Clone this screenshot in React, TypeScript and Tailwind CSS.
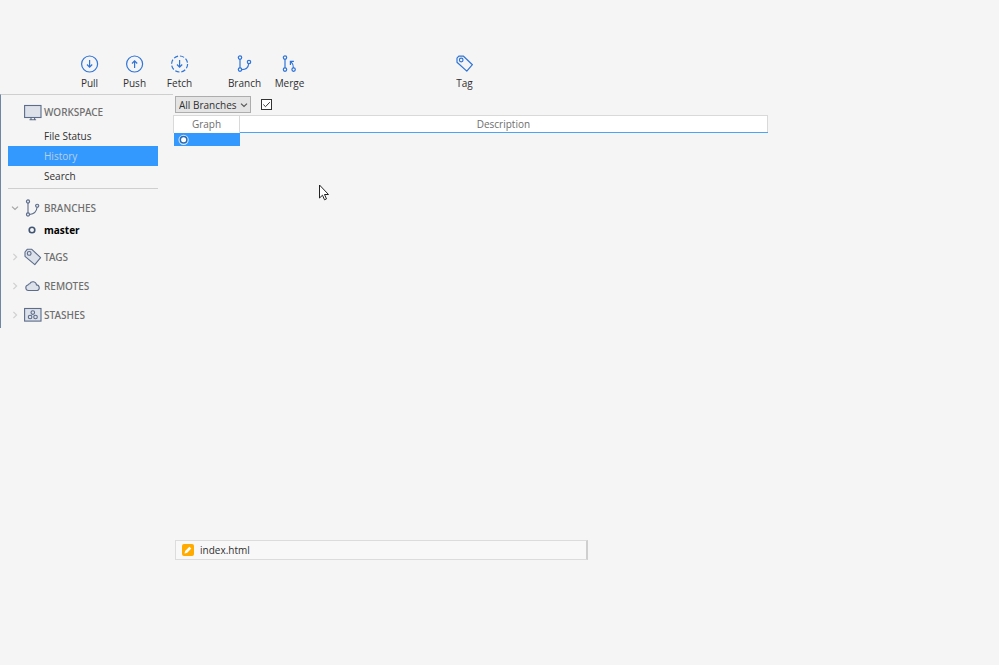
import React, { useState } from 'react';

const TOOLBAR_GROUPS = [
  ['Pull', 'Push', 'Fetch'],
  ['Branch', 'Merge'],
  ['Tag'],
];

const WORKSPACE_ITEMS = ['File Status', 'History', 'Search'];

function ToolbarIcon({ name }: { name: string }) {
  return (
    <svg width="20" height="20" viewBox="0 0 20 20" fill="none" stroke="#2f74d8" strokeWidth="1.2">
      {name === 'Pull' && (
        <>
          <circle cx="9.6" cy="10" r="8" />
          <path d="M9.6 6v7M7 10.5l2.6 2.7 2.6-2.7" />
        </>
      )}
      {name === 'Push' && (
        <>
          <circle cx="9.6" cy="10" r="8" />
          <path d="M9.6 14V7M7 9.5l2.6-2.7 2.6 2.7" />
        </>
      )}
      {name === 'Fetch' && (
        <>
          <circle cx="9.6" cy="10" r="8" strokeDasharray="4.4 1.9" />
          <path d="M9.6 6v7M7 10.5l2.6 2.7 2.6-2.7" />
        </>
      )}
      {name === 'Branch' && (
        <>
          <circle cx="5" cy="3.6" r="1.7" />
          <circle cx="5" cy="15.6" r="1.7" />
          <circle cx="14" cy="8" r="1.7" />
          <path d="M5 5.3v8.6M6.7 15.6c4 0 6.6-2 7-5.9" />
        </>
      )}
      {name === 'Merge' && (
        <>
          <circle cx="5" cy="3.6" r="1.7" />
          <circle cx="5" cy="15.6" r="1.7" />
          <circle cx="13.6" cy="15.6" r="1.7" />
          <path d="M5 5.3v8.6M13.4 13.9c0-2.6-.6-4.4-2.4-6.2M10.4 11V7.3h3.5" />
        </>
      )}
      {name === 'Tag' && (
        <>
          <path d="M2 4.2L3.8 2.2h4.7l8.9 8.5-5.6 6.4L2 8.2z" strokeLinejoin="round" />
          <circle cx="6.2" cy="6" r="1.8" />
        </>
      )}
    </svg>
  );
}

function SectionIcon({ name }: { name: string }) {
  return (
    <svg width="18" height="18" viewBox="0 0 18 18" fill="#dde1ea" stroke="#5c6c89" strokeWidth="1.1" className="shrink-0">
      {name === 'WORKSPACE' && (
        <>
          <rect x="0.6" y="1.5" width="16.4" height="12" />
          <path d="M7 13.8v1.7M10.6 13.8v1.7M5.5 15.7h6.6" />
        </>
      )}
      {name === 'BRANCHES' && (
        <>
          <path d="M4 4v10M5.6 15.5c4.5-.5 7-3 7.4-7" fill="none" />
          <circle cx="4" cy="2.5" r="1.6" />
          <circle cx="4" cy="15.5" r="1.6" />
          <circle cx="13.2" cy="6.8" r="1.6" />
        </>
      )}
      {name === 'TAGS' && (
        <>
          <path d="M1 4L3.2 1.3h4.6l8.8 8.3-5.8 7L1 8.3z" strokeLinejoin="round" />
          <circle cx="5.2" cy="5.4" r="1.9" />
        </>
      )}
      {name === 'REMOTES' && (
        <path d="M4.4 13.5a2.8 2.8 0 0 1-.5-5.5c.4-1 1.2-1.2 1.8-1.2a3.6 3.6 0 0 1 6.8 1.1 2.9 2.9 0 0 1 .9 5.6z" />
      )}
      {name === 'STASHES' && (
        <>
          <rect x="0.6" y="2.5" width="16.4" height="12.6" />
          <circle cx="8.8" cy="6.6" r="1.8" />
          <circle cx="6.1" cy="11" r="1.8" />
          <circle cx="11.5" cy="11" r="1.8" />
        </>
      )}
    </svg>
  );
}

function Chevron({ open, className }: { open: boolean; className: string }) {
  return (
    <svg width="8" height="8" viewBox="0 0 8 8" fill="none" stroke="currentColor" strokeWidth="1.2" className={className}>
      <path d={open ? 'M1 2.6L4 5.4l3-2.8' : 'M2.4 0.8L5.6 4 2.4 7.2'} />
    </svg>
  );
}

function Section({ name, open = false }: { name: string; open?: boolean }) {
  return (
    <button aria-expanded={open} className="flex h-5 w-full items-center pl-2.5 font-['Noto_Sans',sans-serif] font-medium text-[#6e6e6e]">
      <Chevron open={open} className={open ? 'text-[#a5a5a5]' : 'text-[#d0d0d0]'} />
      <span className="ml-[5px] flex items-center gap-0.5">
        <SectionIcon name={name} />
        {name}
      </span>
    </button>
  );
}

function Toolbar() {
  return (
    <header className="flex h-[94px] items-end pl-[67px] pb-1">
      {TOOLBAR_GROUPS.map((group, i) => (
        <div key={i} className={i === 0 ? 'flex' : i === 1 ? 'ml-5 flex' : 'ml-[130px] flex'}>
          {group.map(name => (
            <button key={name} className="flex w-[45px] flex-col items-center gap-0.5">
              <ToolbarIcon name={name} />
              <span className="leading-[14px]">{name}</span>
            </button>
          ))}
        </div>
      ))}
    </header>
  );
}

function Sidebar({ active, onSelect }: { active: string; onSelect: (item: string) => void }) {
  return (
    <nav className="w-[173px] shrink-0 self-start border-t border-l border-t-[#cfcfcf] border-l-[#6f87a5] pb-[3px]">
      <h2 className="flex h-[31px] items-center gap-0.5 pt-1 pl-[23px] font-['Noto_Sans',sans-serif] font-medium text-[#6e6e6e]">
        <SectionIcon name="WORKSPACE" />
        WORKSPACE
      </h2>
      <div className="mr-[15px] ml-[7px] border-b border-[#cfcfcf] pb-0.5">
        {WORKSPACE_ITEMS.map(item => (
          <button
            key={item}
            onClick={() => onSelect(item)}
            className={
              item === active
                ? 'block h-5 w-full bg-[#3399ff] pl-9 text-left text-[#b9cfe6]'
                : 'block h-5 w-full pl-9 text-left'
            }
          >
            {item}
          </button>
        ))}
      </div>
      <div className="mt-[9px] flex flex-col gap-[9px]">
        <div>
          <Section name="BRANCHES" open />
          <button className="flex h-5 w-full items-center pl-[27px] pt-1 font-bold text-black">
            <svg width="8" height="16" viewBox="0 0 8 16" className="mr-2">
              <circle cx="4" cy="8" r="2.8" fill="none" stroke="#405474" strokeWidth="1.6" />
            </svg>
            master
          </button>
        </div>
        <Section name="TAGS" />
        <Section name="REMOTES" />
        <Section name="STASHES" />
      </div>
    </nav>
  );
}

function HistoryTable() {
  return (
    <table className="w-[72%] table-fixed border-collapse">
      <thead>
        <tr className="h-[17px] bg-white text-[#6e6e6e]">
          <th className="w-[66px] border-t border-r border-l border-[#d9d9d9] p-0 leading-4 font-normal">Graph</th>
          <th className="border-t border-r border-b border-t-[#d9d9d9] border-r-[#d9d9d9] border-b-[#4da3f5] p-0 leading-4 font-normal">
            Description
          </th>
        </tr>
      </thead>
      <tbody>
        <tr>
          <td className="h-[13px] bg-[#3399ff] p-0">
            <svg width="14" height="13" viewBox="0 0 14 13" className="ml-[3px]">
              <circle cx="6.6" cy="6.8" r="4.6" fill="#2b6cb0" stroke="#d6e8fb" strokeWidth="1.1" />
              <circle cx="6.6" cy="6.8" r="2.5" fill="#fff" />
            </svg>
          </td>
          <td className="p-0" />
        </tr>
      </tbody>
    </table>
  );
}

export default function App() {
  const [active, setActive] = useState('History');
  const [showRemote, setShowRemote] = useState(true);

  return (
    <div className="relative min-h-screen bg-[#f5f5f5] font-['Open_Sans','Noto_Sans',sans-serif] text-[10px] text-[#303030]">
      <Toolbar />
      <div className="flex">
        <Sidebar active={active} onSelect={setActive} />
        <main className="min-w-0 flex-1">
          <div className="flex h-[21px] items-center gap-2.5 pl-0.5">
            <div className="relative">
              <select
                aria-label="Branch filter"
                className="block h-[17px] w-[76px] appearance-none border border-[#adadad] bg-[#e4e4e4] pl-[3px] leading-[14px]"
              >
                <option>All Branches</option>
              </select>
              <Chevron open className="pointer-events-none absolute top-[5px] right-[3px] text-[#555]" />
            </div>
            <label className="relative size-[11px]">
              <input
                type="checkbox"
                aria-label="Show remote branches"
                checked={showRemote}
                onChange={e => setShowRemote(e.target.checked)}
                className="block size-[11px] appearance-none border border-[#333] bg-white"
              />
              {showRemote && (
                <svg width="11" height="11" viewBox="0 0 11 11" fill="none" stroke="#333" className="pointer-events-none absolute inset-0">
                  <path d="M2.3 5.5l2.2 2.2 4.3-4.5" />
                </svg>
              )}
            </label>
          </div>
          <div className="h-[425px]">
            <HistoryTable />
          </div>
          <ul className="ml-0.5 w-1/2 border border-r-2 border-[#dcdcdc] border-r-[#cfcfcf] bg-[#f8f8f8]">
            <li className="flex h-[18px] items-center gap-1.5 pl-1.5">
              <svg width="12" height="12" viewBox="0 0 12 12">
                <rect width="12" height="12" rx="2" fill="#ffab00" />
                <path d="M2.5 9.5l.6-2.5L7.4 2.7l1.9 1.9L5 8.9z" fill="#fff" />
              </svg>
              index.html
            </li>
          </ul>
        </main>
      </div>
      <svg width="12" height="18" viewBox="0 0 12 18" className="pointer-events-none absolute top-[184px] left-[318px]">
        <path d="M1.5 1v13l3-2.8 2 4.6 2-.9-2-4.4h4z" fill="#fff" stroke="#222" />
      </svg>
    </div>
  );
}
